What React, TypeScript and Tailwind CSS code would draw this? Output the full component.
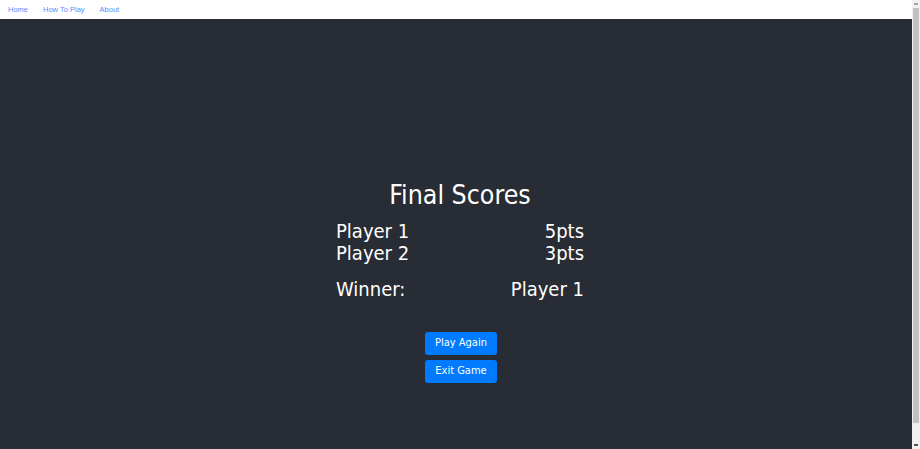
import React from "react";

const font = { fontFamily: '"DejaVu Sans Condensed", "DejaVu Sans", Verdana, sans-serif' };

export default function App() {
  return (
    <div className="relative w-[920px] h-[449px] overflow-hidden bg-[#282c34]">
      <nav className="h-[19px] bg-white flex items-center gap-[15px] pl-[8px] text-[7.5px] text-[#5b8cff]" style={{ fontFamily: '"Liberation Sans", Arial, sans-serif' }}>
        <a className="cursor-pointer">Home</a>
        <a className="cursor-pointer">How To Play</a>
        <a className="cursor-pointer">About</a>
      </nav>
      <main className="flex flex-col items-center text-white pt-[160px]" style={font}>
        <h2 className="text-[26.5px] leading-[32px]">Final Scores</h2>
        <div className="w-[248px] mt-[9px] grid grid-cols-2 text-[20px] leading-[22px]">
          <span>Player 1</span>
          <span className="text-right">5pts</span>
          <span>Player 2</span>
          <span className="text-right">3pts</span>
          <span className="mt-[14px]">Winner:</span>
          <span className="mt-[14px] text-right">Player 1</span>
        </div>
        <div className="mt-[32px] ml-[2px] flex flex-col items-center gap-[5px]">
          <button className="w-[72px] h-[23px] rounded-[3px] bg-[#007bff] text-white text-[11px]">Play Again</button>
          <button className="w-[72px] h-[23px] rounded-[3px] bg-[#007bff] text-white text-[11px]">Exit Game</button>
        </div>
      </main>
      <div className="absolute top-0 right-0 w-[8px] h-[449px] bg-[#f0f0f0]">
        <div className="absolute top-[3px] left-[2px] w-[4px] h-[2px] bg-[#a3a3a3]" />
        <div className="absolute top-[8px] left-[1px] w-[6px] h-[415px] bg-[#c1c1c1]" />
        <div className="absolute top-[444px] left-[2px] w-[4px] h-[2px] bg-[#505050]" />
      </div>
    </div>
  );
}
